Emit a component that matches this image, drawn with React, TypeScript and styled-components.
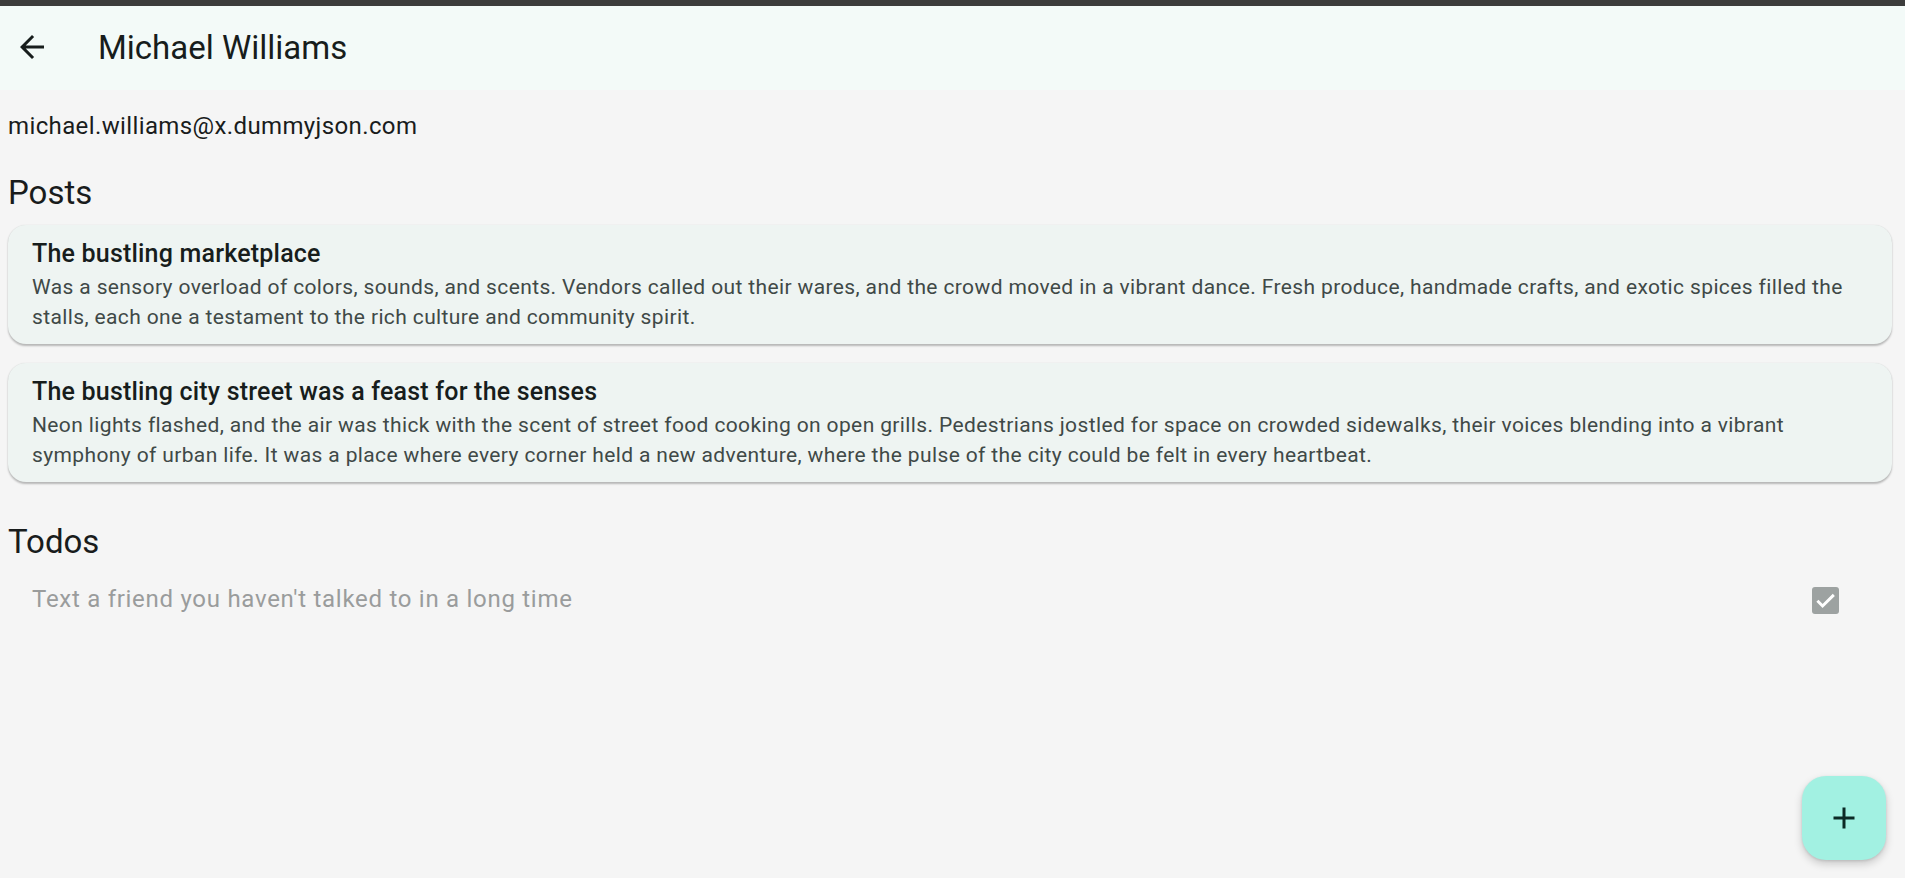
import styled, { createGlobalStyle } from "styled-components";

const GlobalStyle = createGlobalStyle`
  html, body {
    margin: 0;
    padding: 0;
    background: #f5f5f5;
    font-family: Roboto, "Noto Sans", sans-serif;
    -webkit-font-smoothing: antialiased;
  }
`;

const Page = styled.div`
  min-height: 878px;
  display: flex;
  flex-direction: column;
  background: #f5f5f5;
  border-top: 6px solid #3c3c3c;
  box-sizing: border-box;
`;

const AppBar = styled.header`
  height: 84px;
  display: flex;
  align-items: center;
  background: #f3faf8;
  padding-left: 14px;
`;

const BackButton = styled.button`
  width: 36px;
  height: 36px;
  padding: 0;
  border: none;
  background: transparent;
  color: #171d1c;
  display: flex;
  align-items: center;
  justify-content: center;
  cursor: pointer;
  margin-top: -2px;
`;

const Title = styled.h1`
  margin: 0 0 0 48px;
  font-size: 33px;
  font-weight: 400;
  line-height: 40px;
  color: #171d1c;
`;

const Content = styled.main`
  display: flex;
  flex-direction: column;
  padding: 0 13px 0 8px;
`;

const Email = styled.div`
  margin-top: 22px;
  font-size: 24px;
  line-height: 28px;
  letter-spacing: 0.38px;
  color: #191c1c;
`;

const SectionTitle = styled.h2<{ $gap: number }>`
  margin: ${(p) => p.$gap}px 0 0;
  font-size: 33px;
  font-weight: 400;
  line-height: 39px;
  color: #191c1c;
`;

const PostList = styled.div`
  display: flex;
  flex-direction: column;
  gap: 19px;
  margin-top: 13px;
`;

const Card = styled.article`
  background: #eef4f2;
  border-radius: 18px;
  padding: 11px 24px 12px;
  box-shadow: 0 1.5px 2px rgba(0, 0, 0, 0.25), 0 0 1px rgba(0, 0, 0, 0.08);
`;

const CardTitle = styled.div`
  font-size: 25px;
  font-weight: 500;
  line-height: 36px;
  letter-spacing: 0.2px;
  color: #171d1c;
`;

const CardBody = styled.div`
  font-size: 21px;
  line-height: 30px;
  letter-spacing: 0.375px;
  color: #3f4947;
`;

const TodoRow = styled.label`
  display: flex;
  align-items: center;
  justify-content: space-between;
  margin-top: 24px;
  padding: 0 53px 0 24px;
  height: 28px;
`;

const TodoText = styled.span<{ $done: boolean }>`
  font-size: 24px;
  line-height: 28px;
  letter-spacing: 0.72px;
  color: ${(p) => (p.$done ? "#9a9c9c" : "#191c1c")};
`;

const CheckBox = styled.span<{ $checked: boolean }>`
  width: 27px;
  height: 27px;
  border-radius: 3px;
  background: ${(p) => (p.$checked ? "#9da2a1" : "transparent")};
  display: flex;
  align-items: center;
  justify-content: center;
  margin-top: 2px;
`;

const Fab = styled.button`
  position: fixed;
  right: 19px;
  bottom: 18px;
  width: 84px;
  height: 84px;
  border: none;
  border-radius: 24px;
  background: #a2f1e2;
  color: #0b2a25;
  display: flex;
  align-items: center;
  justify-content: center;
  box-shadow: 0 4px 8px rgba(0, 0, 0, 0.18), 0 1px 3px rgba(0, 0, 0, 0.12);
  cursor: pointer;
`;

const posts = [
  {
    title: "The bustling marketplace",
    body: "Was a sensory overload of colors, sounds, and scents. Vendors called out their wares, and the crowd moved in a vibrant dance. Fresh produce, handmade crafts, and exotic spices filled the stalls, each one a testament to the rich culture and community spirit.",
  },
  {
    title: "The bustling city street was a feast for the senses",
    body: "Neon lights flashed, and the air was thick with the scent of street food cooking on open grills. Pedestrians jostled for space on crowded sidewalks, their voices blending into a vibrant symphony of urban life. It was a place where every corner held a new adventure, where the pulse of the city could be felt in every heartbeat.",
  },
];

const todos = [{ text: "Text a friend you haven't talked to in a long time", done: true }];

export default function App() {
  return (
    <Page>
      <GlobalStyle />
      <AppBar>
        <BackButton aria-label="Back">
          <svg width="36" height="36" viewBox="0 0 24 24" fill="currentColor">
            <path d="M20 11H7.83l5.59-5.59L12 4l-8 8 8 8 1.41-1.41L7.83 13H20v-2z" />
          </svg>
        </BackButton>
        <Title>Michael Williams</Title>
      </AppBar>

      <Content>
        <Email>michael.williams@x.dummyjson.com</Email>

        <SectionTitle $gap={33}>Posts</SectionTitle>
        <PostList>
          {posts.map((p) => (
            <Card key={p.title}>
              <CardTitle>{p.title}</CardTitle>
              <CardBody>{p.body}</CardBody>
            </Card>
          ))}
        </PostList>

        <SectionTitle $gap={40}>Todos</SectionTitle>
        {todos.map((t) => (
          <TodoRow key={t.text}>
            <TodoText $done={t.done}>{t.text}</TodoText>
            <CheckBox $checked={t.done}>
              {t.done && (
                <svg width="27" height="27" viewBox="0 0 24 24" fill="none">
                  <path d="M4.8 12.3l4.6 4.6L19.4 7" stroke="#fff" strokeWidth="2.6" />
                </svg>
              )}
            </CheckBox>
          </TodoRow>
        ))}
      </Content>

      <Fab aria-label="Add">
        <svg width="36" height="36" viewBox="0 0 24 24" fill="currentColor">
          <path d="M19 13h-6v6h-2v-6H5v-2h6V5h2v6h6v2z" />
        </svg>
      </Fab>
    </Page>
  );
}
